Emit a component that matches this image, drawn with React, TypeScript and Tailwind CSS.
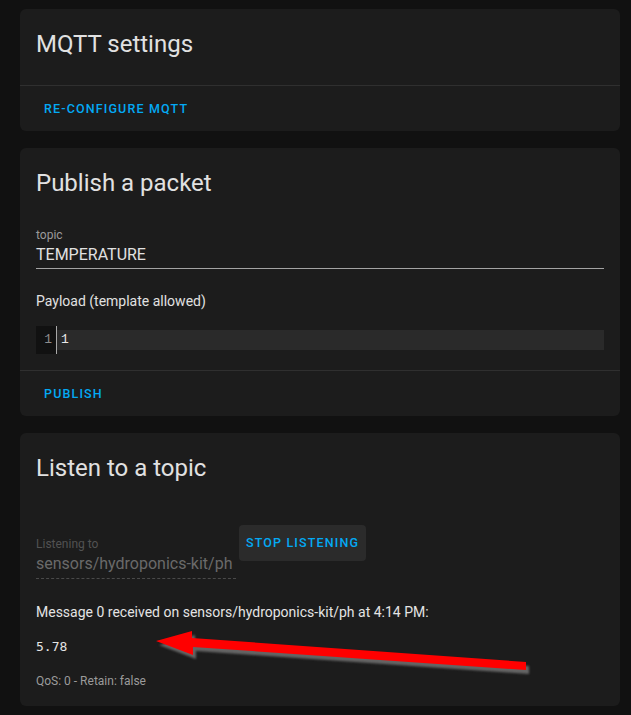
import React from 'react';

const Card: React.FC<{ title: string; children?: React.ReactNode; actions?: React.ReactNode }> = ({
  title,
  children,
  actions,
}) => (
  <div className="bg-[#1c1c1c] rounded-[6px] w-[600px]">
    <div className="px-4 pt-[19px] pb-[25px] text-[24px] leading-[32px] text-[#e1e1e1]">{title}</div>
    {children}
    {actions && (
      <div className="border-t border-[#2f2f2f] px-2 pt-[5px] pb-[4px] flex">{actions}</div>
    )}
  </div>
);

const TextButton: React.FC<{ label: string }> = ({ label }) => (
  <button className="h-9 px-4 text-[12.5px] font-medium tracking-[1.15px] uppercase text-[#03a9f4]">
    {label}
  </button>
);

export default function App() {
  return (
    <div className="relative min-h-[715px] bg-[#111111] pt-[9px] pl-[20px] font-['Roboto',sans-serif] overflow-hidden">
      <Card title="MQTT settings" actions={<TextButton label="Re-configure MQTT" />} />

      <div className="h-[17px]" />

      <Card title="Publish a packet" actions={<TextButton label="Publish" />}>
        <div className="px-4 pt-[3px] pb-4">
          <div className="border-b border-[#a3a3a3] pb-[1px]">
            <div className="text-[12px] leading-[16px] text-[#9b9b9b]">topic</div>
            <div className="text-[16px] leading-[24px] text-[#e1e1e1]">TEMPERATURE</div>
          </div>
          <div className="mt-[22px] text-[14px] leading-[20px] text-[#e1e1e1]">Payload (template allowed)</div>
          <div className="mt-[15px] flex h-[28px] font-['Liberation_Mono',monospace] text-[13px]">
            <div className="w-[21px] bg-[#111111] border-r border-[#a8a8a8] flex items-center justify-end pr-[4px] text-[#8c8c8c]">
              1
            </div>
            <div className="flex-1 py-[4px]">
              <div className="h-[20px] bg-[#2a2a2a] leading-[20px] pl-[4px] text-[#e8e8e8]">1</div>
            </div>
          </div>
        </div>
      </Card>

      <div className="h-[17px]" />

      <Card title="Listen to a topic">
        <div className="px-4 pb-[17px]">
          <div className="flex items-start gap-[3px] pt-[16px]">
            <div className="w-[200px] pt-[11px] pb-[2px] border-b border-dashed border-[#4a4a4a]">
              <div className="text-[12px] leading-[16px] text-[#525252]">Listening to</div>
              <div className="text-[16px] leading-[24px] text-[#6a6a6a] whitespace-nowrap">
                sensors/hydroponics-kit/ph
              </div>
            </div>
            <button className="h-9 w-[127px] rounded-[4px] bg-[#2b2b2b] text-[12.5px] font-medium tracking-[1.15px] text-[#03a9f4]">
              STOP LISTENING
            </button>
          </div>
          <div className="mt-[23px] text-[14px] leading-[20px] text-[#e4e4e4]">
            Message 0 received on sensors/hydroponics-kit/ph at 4:14 PM:
          </div>
          <div className="mt-[15px] font-['DejaVu_Sans_Mono',monospace] text-[13px] leading-[20px] text-[#e4e4e4]">
            5.78
          </div>
          <div className="mt-[16px] text-[12px] leading-[16px] text-[#9b9b9b]">QoS: 0 - Retain: false</div>
        </div>
      </Card>

      <svg className="absolute left-0 top-0 pointer-events-none" width="631" height="715" viewBox="0 0 631 715">
        <defs>
          <filter id="sh" x="-10%" y="-50%" width="120%" height="200%">
            <feGaussianBlur stdDeviation="1.2" />
          </filter>
        </defs>
        <g transform="translate(3,4)" filter="url(#sh)" fill="#777777" opacity="0.8">
          <polygon points="156,641 192,631 192,638 526,662 526,670 193,647 193,655" />
        </g>
        <polygon fill="#ff0000" points="156,641 192,631 192,638 526,662 526,670 193,647 193,655" />
      </svg>
    </div>
  );
}
